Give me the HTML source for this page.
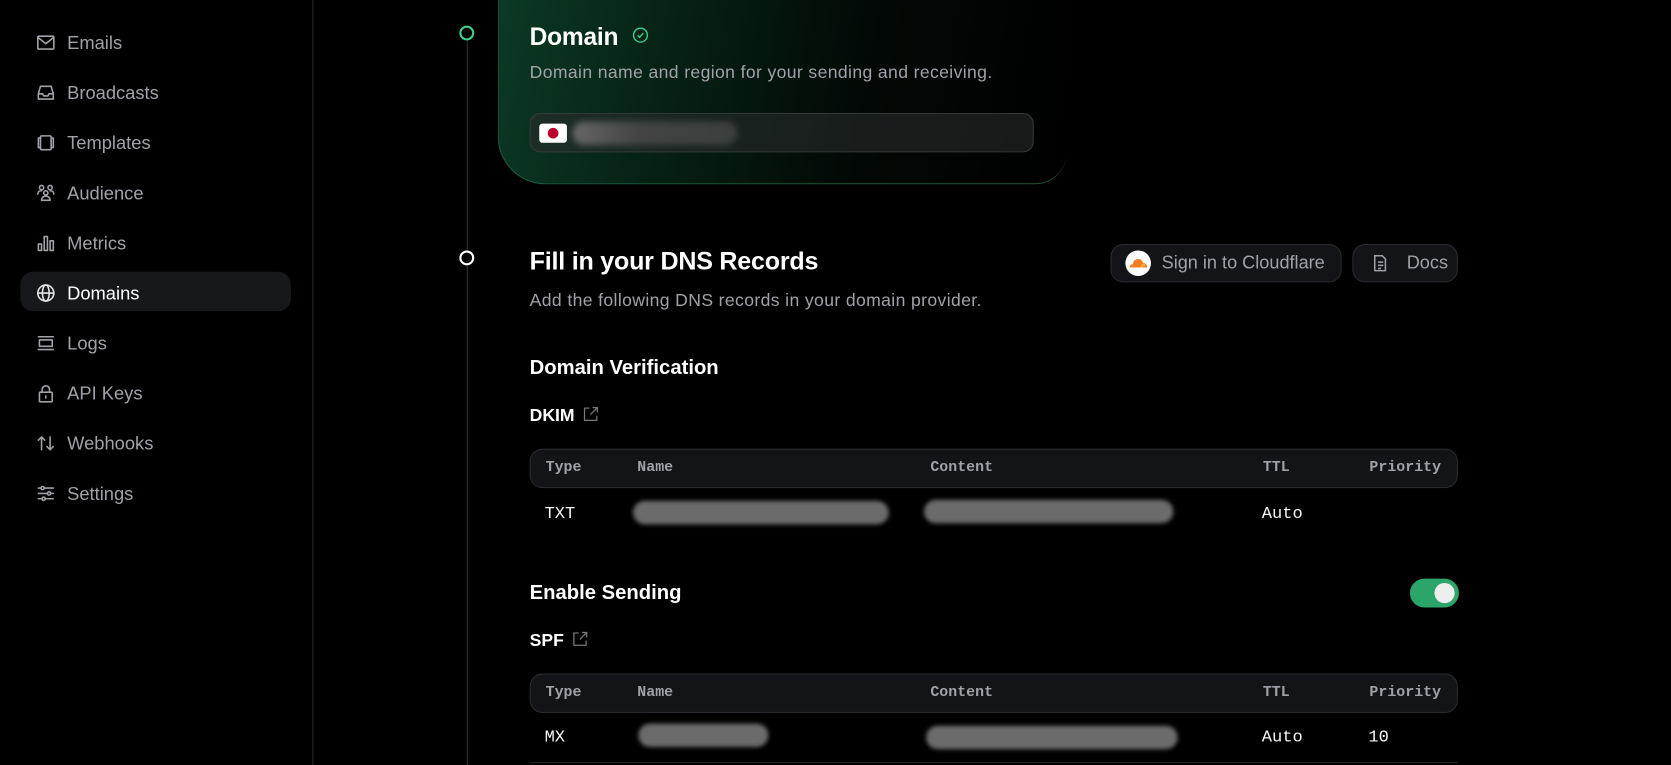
<!DOCTYPE html>
<html><head><meta charset="utf-8"><style>
html,body{margin:0;padding:0;background:#000;width:1671px;height:765px;overflow:hidden}
#w{position:absolute;left:0;top:0;width:1568px;height:718px;transform:scale(1.0657);transform-origin:0 0;font-family:"Liberation Sans",sans-serif;color:#fff}
.a{position:absolute}
.nav{position:absolute;left:34px;height:20px;display:flex;align-items:center;color:#a1a1aa;font-size:17.2px}
.nav svg{width:18px;height:18px;margin-right:11px;stroke:#a1a1aa;fill:none;stroke-width:1.5;stroke-linecap:round;stroke-linejoin:round}
.h2{font-weight:bold;font-size:23px;letter-spacing:-0.2px}
.sub{color:#a1a1aa;font-size:16.5px;letter-spacing:0.35px}
.btn{position:absolute;height:36px;border:1px solid #2a2b30;background:#131417;border-radius:12px;display:flex;align-items:center;color:#a1a1aa;font-size:17px;box-sizing:border-box}
.th{position:absolute;left:497px;width:871px;height:37px;border:1px solid #2a2b30;background:#131417;border-radius:12px;box-sizing:border-box}
.th span{position:absolute;top:9px;font-family:"Liberation Mono",monospace;font-weight:bold;font-size:14px;color:#a1a1aa}
.td{position:absolute;font-family:"Liberation Mono",monospace;font-size:16px;color:#f4f4f5}
.blur{position:absolute;height:22px;border-radius:11px;background:#6b6b6b;filter:blur(2px)}
.ext{display:inline-block;width:15px;height:15px;margin-left:8px;vertical-align:-1px}
</style></head><body><div id="w">
<div class="a" style="left:19px;top:255px;width:254px;height:37px;background:#17181b;border-radius:12px"></div>
<div class="nav" style="top:30px"><svg viewBox="0 0 18 18"><rect x="1.5" y="3" width="15" height="12" rx="1"/><path d="M1.5 4l7.5 6 7.5-6"/></svg>Emails</div>
<div class="nav" style="top:77px"><svg viewBox="0 0 18 18"><path d="M2 10l2-7h10l2 7v5H2z"/><path d="M2 10h4l1 2h4l1-2h4"/></svg>Broadcasts</div>
<div class="nav" style="top:124px"><svg viewBox="0 0 18 18"><rect x="4" y="2.5" width="10" height="13" rx="1"/><path d="M4 4.5H2v9h2M14 4.5h2v9h-2"/></svg>Templates</div>
<div class="nav" style="top:171px"><svg viewBox="0 0 18 18"><circle cx="5" cy="4" r="2"/><circle cx="13" cy="4" r="2"/><circle cx="9" cy="9" r="2"/><path d="M1.5 10c0-2 1.5-3 3.5-3M16.5 10c0-2-1.5-3-3.5-3M5 16c0-2.5 2-4 4-4s4 1.5 4 4z"/></svg>Audience</div>
<div class="nav" style="top:218px"><svg viewBox="0 0 18 18"><rect x="2" y="10" width="3" height="6"/><rect x="7.5" y="3" width="3" height="13"/><rect x="13" y="7" width="3" height="9"/></svg>Metrics</div>
<div class="nav" style="top:265px;color:#fff"><svg viewBox="0 0 18 18" style="stroke:#e4e4e7"><circle cx="9" cy="9" r="7.5"/><ellipse cx="9" cy="9" rx="3.2" ry="7.5"/><path d="M1.5 9h15"/></svg>Domains</div>
<div class="nav" style="top:312px"><svg viewBox="0 0 18 18"><path d="M2 3h14M2 15h14"/><rect x="3" y="6" width="12" height="6"/></svg>Logs</div>
<div class="nav" style="top:359px"><svg viewBox="0 0 18 18"><rect x="3" y="8" width="12" height="9" rx="1"/><path d="M5.5 8V5.5a3.5 3.5 0 017 0V8M9 11.5v2"/></svg>API Keys</div>
<div class="nav" style="top:406px"><svg viewBox="0 0 18 18"><path d="M5 15V3M2 6l3-3 3 3M13 3v12M10 12l3 3 3-3"/></svg>Webhooks</div>
<div class="nav" style="top:453px"><svg viewBox="0 0 18 18"><path d="M2 4h14M2 9h14M2 14h14"/><circle cx="6" cy="4" r="1.5" fill="#000"/><circle cx="12" cy="9" r="1.5" fill="#000"/><circle cx="7" cy="14" r="1.5" fill="#000"/></svg>Settings</div>
<div class="a" style="left:293px;top:0;width:1px;height:718px;background:#26262a"></div>
<div class="a" style="left:438px;top:38px;width:1px;height:680px;background:#2e2e33"></div>
<div class="a" style="left:431px;top:24px;width:10px;height:10px;border:2px solid #3ecf8e;border-radius:50%;background:#000"></div>
<div class="a" style="left:431px;top:235px;width:10px;height:10px;border:2px solid #fff;border-radius:50%;background:#000"></div>
<div class="a" style="left:467px;top:-40px;width:533px;height:212px;border-radius:0 0 30px 45px;background:linear-gradient(100deg,#0c3a25 0%,#062215 30%,#020805 65%,#000 100%);border-left:1px solid #1d5a3a;border-bottom:1px solid #1d5a3a;"></div>
<div class="a h2" style="left:497px;top:21px">Domain</div>
<svg class="a" style="left:593px;top:25px" width="16" height="16" viewBox="0 0 16 16" fill="none" stroke="#3ecf8e" stroke-width="1.3"><circle cx="8" cy="8" r="6.5"/><path d="M5.3 8.2l1.8 1.8 3.6-3.8"/></svg>
<div class="a sub" style="left:497px;top:59px">Domain name and region for your sending and receiving.</div>
<div class="a" style="left:497px;top:106px;width:473px;height:37px;border:1px solid #34393a;border-radius:10px;background:rgba(40,44,44,0.6);box-sizing:border-box"></div>
<div class="a" style="left:506px;top:116px;width:26px;height:18px;background:#fff;border-radius:3px"><div style="position:absolute;left:8px;top:4px;width:10px;height:10px;border-radius:50%;background:#bc002d"></div></div>
<div class="a" style="left:537px;top:114px;width:155px;height:22px;border-radius:11px;background:linear-gradient(90deg,#666,#444 40%,#3a3f3e);filter:blur(3px)"></div>
<div class="a h2" style="left:497px;top:232px;font-size:23.5px">Fill in your DNS Records</div>
<div class="a sub" style="left:497px;top:273px">Add the following DNS records in your domain provider.</div>
<div class="btn" style="left:1042px;top:229px;width:217px;padding-left:13px"><span style="width:24px;height:24px;border-radius:50%;background:#fff;display:inline-block;position:relative;margin-right:10px"><svg style="position:absolute;left:2px;top:6px" width="20" height="11" viewBox="0 0 20 11"><path d="M2 10c0-2 1.5-3 3-3 0-3 2.5-5 5-5s4 1.5 4.5 3.5C17 5.5 18.5 7.5 18.5 10z" fill="#f38020"/><path d="M13 10c.5-2 2-3 3.5-3" stroke="#fbad41" stroke-width="2" fill="none"/></svg></span>Sign in to Cloudflare</div>
<div class="btn" style="left:1269px;top:229px;width:99px;padding-left:16px"><svg width="18" height="18" viewBox="0 0 18 18" fill="none" stroke="#a1a1aa" stroke-width="1.4" style="margin-right:16px"><path d="M4 2h7l3 3v11H4z"/><path d="M7 8h5M7 11h5M7 14h3"/></svg>Docs</div>
<div class="a" style="left:497px;top:335px;font-weight:bold;font-size:19px">Domain Verification</div>
<div class="a" style="left:497px;top:381px;font-weight:bold;font-size:16.5px">DKIM<svg class="ext" viewBox="0 0 15 15" fill="none" stroke="#777" stroke-width="1.2"><path d="M6 2H1.5v11.5H13V9M9 1.5h4.5V6M13.5 1.5L7 8"/></svg></div>
<div class="th" style="top:421px"><span style="left:14px">Type</span><span style="left:100px">Name</span><span style="left:375px">Content</span><span style="left:687px">TTL</span><span style="left:787px">Priority</span></div>
<div class="td" style="left:511px;top:473px">TXT</div>
<div class="blur" style="left:594px;top:470px;width:240px"></div>
<div class="blur" style="left:867px;top:469px;width:234px"></div>
<div class="td" style="left:1184px;top:473px">Auto</div>
<div class="a" style="left:497px;top:546px;font-weight:bold;font-size:19px">Enable Sending</div>
<div class="a" style="left:1323px;top:543px;width:46px;height:27px;border-radius:14px;background:#2ca56b"><div style="position:absolute;right:4px;top:4px;width:19px;height:19px;border-radius:50%;background:#eee"></div></div>
<div class="a" style="left:497px;top:592px;font-weight:bold;font-size:16.5px">SPF<svg class="ext" viewBox="0 0 15 15" fill="none" stroke="#777" stroke-width="1.2"><path d="M6 2H1.5v11.5H13V9M9 1.5h4.5V6M13.5 1.5L7 8"/></svg></div>
<div class="th" style="top:632px"><span style="left:14px">Type</span><span style="left:100px">Name</span><span style="left:375px">Content</span><span style="left:687px">TTL</span><span style="left:787px">Priority</span></div>
<div class="td" style="left:511px;top:683px">MX</div>
<div class="blur" style="left:599px;top:679px;width:122px"></div>
<div class="blur" style="left:869px;top:681px;width:236px"></div>
<div class="td" style="left:1184px;top:683px">Auto</div>
<div class="td" style="left:1284px;top:683px">10</div>
<div class="a" style="left:497px;top:715px;width:871px;height:1px;background:#26262a"></div>
</div></body></html>
